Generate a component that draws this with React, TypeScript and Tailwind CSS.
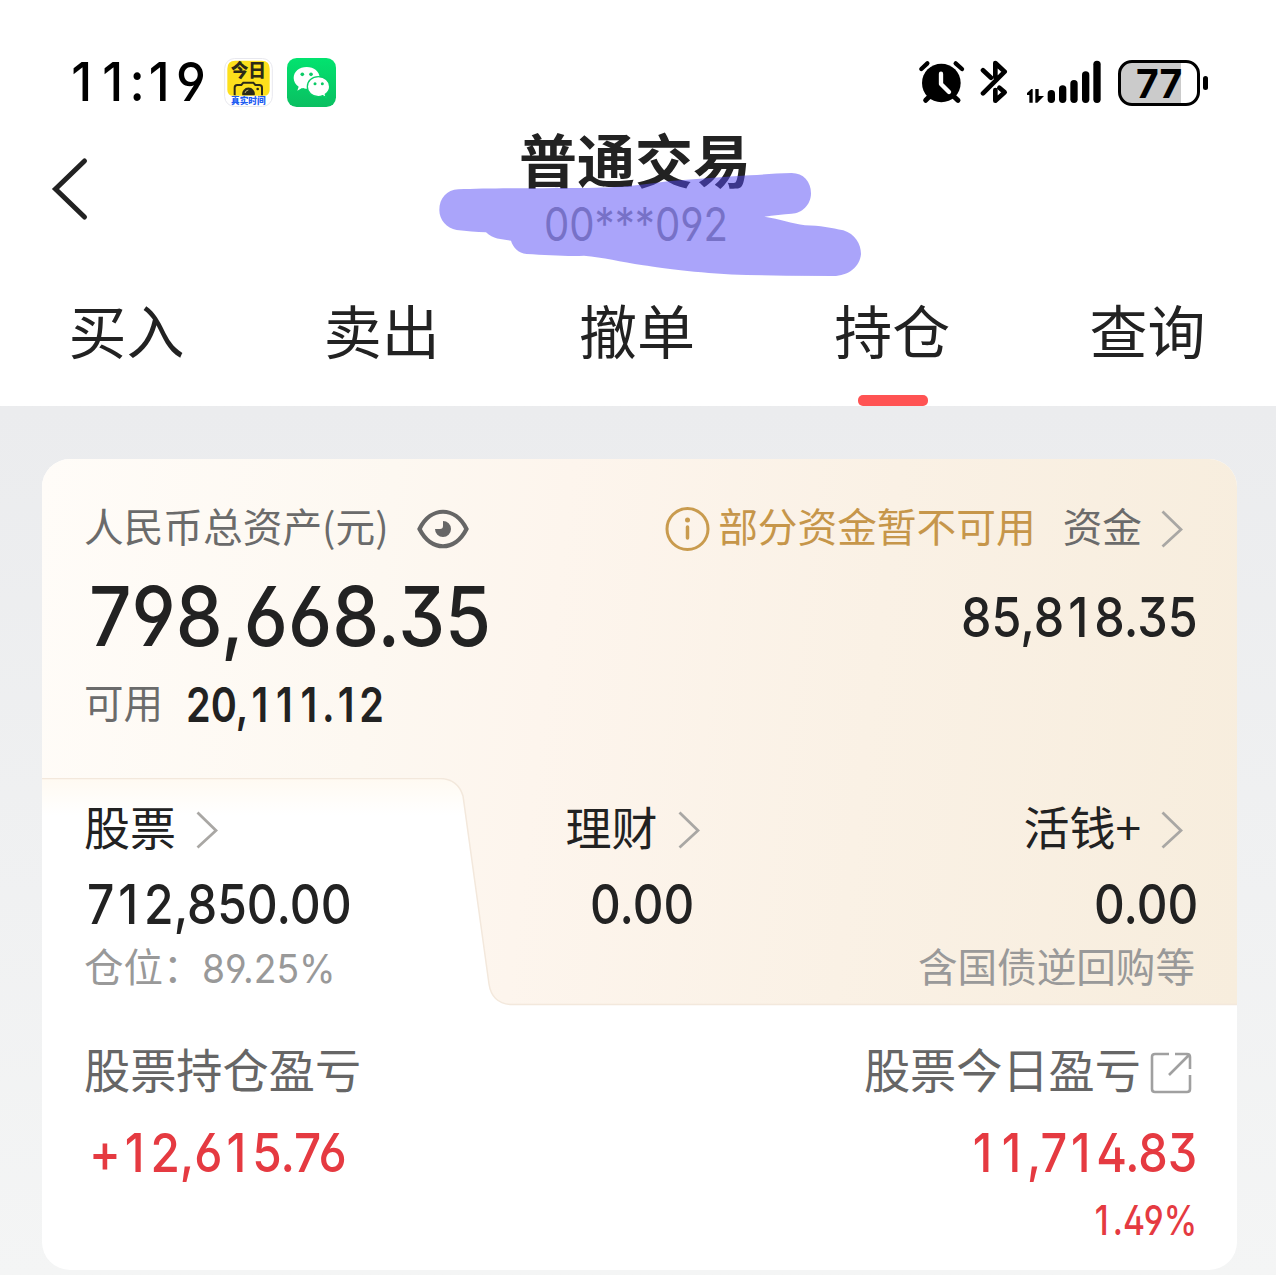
import { useLayoutEffect, useRef, useState } from "react";
import type { ReactNode } from "react";

const CJK = "font-['Noto_Sans_CJK_SC',sans-serif]";

/** Evenly pitched digits, fitted so the run is exactly `width` pixels wide. */
function Num({ text, width, className }: { text: string; width: number; className: string }) {
  const ref = useRef<HTMLSpanElement>(null);
  const [scale, setScale] = useState(1);
  useLayoutEffect(() => {
    if (ref.current) setScale(width / ref.current.offsetWidth);
  }, [width, text]);
  return (
    <span className="block shrink-0" style={{ width }}>
      <span
        ref={ref}
        className={`inline-block origin-left whitespace-nowrap font-['Inter',sans-serif] leading-none [font-feature-settings:'cv03','cv04','ss01'] ${className}`}
        style={{ transform: `scaleX(${scale})` }}
      >
        {text.split(/(1)/).map((part, i) =>
          part === "1" ? (
            <span key={i} className="inline-block w-[0.62em] pr-[0.04em] text-center">
              1
            </span>
          ) : (
            part
          ),
        )}
      </span>
    </span>
  );
}

function Row({ className, children }: { className: string; children: ReactNode }) {
  return <div className={`flex items-center ${className}`}>{children}</div>;
}

function Zh({ className, children }: { className: string; children: ReactNode }) {
  return <span className={`block whitespace-nowrap leading-none ${className}`}>{children}</span>;
}

function Chevron({ className = "" }: { className?: string }) {
  return (
    <svg className={`h-[38px] w-[22px] shrink-0 ${className}`} viewBox="0 0 22 38" fill="none" stroke="#a9a7a4" strokeWidth="2.8">
      <path d="M1.5 1.5 L20 19.5 L1.5 36.5" />
    </svg>
  );
}

function CameraApp() {
  return (
    <svg className="h-[49px] w-[49px]" viewBox="0 0 147 147">
      <rect x="2" y="1.500" width="143" height="144" rx="30" fill="#fff" stroke="#e8e8ee" strokeWidth="3" />
      <path d="M10 32 Q10 8 34 8 H113 Q137 8 137 32 V95 Q137 113 119 113 H28 Q10 113 10 95Z" fill="#fde01c" />
      <text x="73" y="58" textAnchor="middle" fontSize="53" fontWeight="800" fill="#2c2a18" fontFamily="Noto Sans CJK SC">今日</text>
      <path d="M32 112 V89 Q32 81 40 81 H52 L58 74 H88 L94 81 H106 Q114 81 114 89 V112" fill="none" stroke="#2c2a18" strokeWidth="6" />
      <path d="M55 112 A19 19 0 1 1 92 112Z" fill="#2c2a18" />
      <path d="M63 105 Q65 97 73 96" fill="none" stroke="#b8b070" strokeWidth="3" />
      <circle cx="101" cy="93" r="4" fill="#2c2a18" />
      <text x="73" y="139" textAnchor="middle" fontSize="26" fontWeight="800" fill="#1d5cf2" fontFamily="Noto Sans CJK SC">真实时间</text>
    </svg>
  );
}

function ChatApp() {
  return (
    <svg className="h-[49px] w-[49px]" viewBox="0 0 147 147">
      <defs>
        <linearGradient id="chat" x1="0" y1="0" x2="0" y2="1">
          <stop offset="0" stopColor="#02e36f" />
          <stop offset="1" stopColor="#0abf61" />
        </linearGradient>
      </defs>
      <rect width="147" height="147" rx="29" fill="url(#chat)" />
      <path d="M59 27 C37 27 20 41 20 60 C20 71 26 80 35 86 L31 98 L45 90 C50 92 55 92 60 92 C82 92 98 78 98 60 C98 41 81 27 59 27Z" fill="#fff" />
      <path d="M94 56 C75 56 61 69 61 86 C61 103 75 116 94 116 C99 116 103 115 107 113 L118 119 L115 109 C123 103 128 95 128 86 C128 69 113 56 94 56Z" fill="#fff" stroke="#06cf67" strokeWidth="4" />
      <g fill="#0acb66">
        <circle cx="46" cy="49" r="5.500" />
        <circle cx="72" cy="49" r="5.500" />
        <circle cx="84" cy="77" r="4.500" />
        <circle cx="106" cy="77" r="4.500" />
      </g>
    </svg>
  );
}

function StatusBar() {
  return (
    <div className="flex h-[50px] items-center pl-[67px] pr-[68px]">
      <div className="pb-[2px]">
        <Num text="11:19" width={139} className="text-[54px] font-medium text-black" />
      </div>
      <div className="ml-[18px] flex gap-[14px] pb-[1px]">
        <CameraApp />
        <ChatApp />
      </div>
      <div className="ml-auto flex items-center">
        <svg className="mr-[1px] h-12 w-12" viewBox="54 57 144 144" stroke="#000" strokeLinecap="round" fill="none">
          <circle cx="124" cy="129" r="58" fill="#000" stroke="none" />
          <path d="M64 87 L82 70 M167 70 L186 87" strokeWidth="13" />
          <path d="M77 181 L90 168 M174 181 L160 168" strokeWidth="15" />
          <path d="M123 101 V132 L147 156" stroke="#fff" strokeWidth="13" strokeLinejoin="round" />
        </svg>
        <svg className="ml-[13px] h-12 w-[30px]" viewBox="242 57 90 144" fill="none" stroke="#000" strokeWidth="14" strokeLinecap="round" strokeLinejoin="round">
          <path d="M251 91 L275 113" />
          <path d="M288 112 V69 L316 95 L251 160" />
          <path d="M288 150 V182 L316 157 L300 143" />
        </svg>
        <svg className="ml-[15px] mr-[1px] h-12 w-[77px]" viewBox="375 57 231 144">
          <path d="M398 188 H388 V165 H381 V159 L394 147 H398Z M406 147 H416 V168 H432 L412 188 H406Z" />
          <rect x="443" y="150" width="22" height="39" rx="11" />
          <rect x="477" y="136" width="22" height="53" rx="11" />
          <rect x="511" y="120" width="22" height="69" rx="11" />
          <rect x="546" y="94" width="22" height="95" rx="11" />
          <rect x="580" y="62" width="22" height="127" rx="11" />
        </svg>
        <div className="ml-[15px] flex items-center gap-[3px]">
          <div className="flex h-[46px] w-[82px] items-center justify-center rounded-[14px] border-[3px] border-black bg-[linear-gradient(90deg,#cbcbcb_60px,#fff_60px)] pt-[1px]">
            <Num text="77" width={46} className="text-[40px] font-bold text-black" />
          </div>
          <div className="h-[14px] w-[5px] rounded-full bg-black" />
        </div>
      </div>
    </div>
  );
}

function Header() {
  return (
    <div className="relative flex h-[174px] items-start">
      <svg className="ml-[50px] mt-[48px] h-[66px] w-[42px]" viewBox="0 0 42 66" fill="none" stroke="#222" strokeWidth="5" strokeLinecap="round" strokeLinejoin="round">
        <path d="M34.500 5 L5.500 33 L34.500 61" strokeLinejoin="miter" />
      </svg>
      <div className="ml-[345px] flex w-[396px] flex-col items-center">
        <Zh className="mt-[21px] text-[58px] font-bold text-[#222]">普通交易</Zh>
        <div className="ml-[2px] mt-[14px]">
          <Num text="00***092" width={184} className="text-[46px] text-[#999]" />
        </div>
      </div>
      <svg className="absolute left-[430px] top-[12px] h-[170px] w-[440px]" viewBox="0 0 1320 510">
        <path
          fill="#5549f5"
          fillOpacity="0.5"
          d="M85 208 C200 203 380 205 500 203 C600 202 660 190 720 183 C800 178 880 170 960 166 C1000 164 1040 159 1085 159 C1120 159 1143 185 1143 220 C1143 255 1115 281 1085 281 C1060 283 1030 285 1003 290 C1050 297 1085 310 1125 316 C1170 317 1205 324 1240 331 C1275 342 1293 372 1293 402 C1290 440 1255 468 1210 468 L1070 467 L950 465 C830 463 700 445 640 436 C570 425 520 412 462 407 C420 410 350 405 290 402 C265 400 248 380 243 362 C215 358 190 358 168 337 C140 337 110 333 80 330 C50 325 28 300 28 270 C28 235 50 210 85 208Z"
        />
      </svg>
    </div>
  );
}

const tabs = ["买入", "卖出", "撤单", "持仓", "查询"];

function Tabs() {
  return (
    <div className="grid h-[124px] grid-cols-5">
      {tabs.map((t) => (
        <div key={t} className="flex flex-col items-center">
          <Zh className="mr-[2px] mt-[18px] text-[58px] text-[#222]">{t}</Zh>
          {t === "持仓" && <div className="mt-auto h-[11px] w-[70px] rounded-[5px] bg-[#ff5353]" />}
        </div>
      ))}
    </div>
  );
}

function Summary() {
  return (
    <div className="h-[319px] pl-[42px] pr-[41px] pt-[39px]">
      <Row className="h-[60px]">
        <Zh className="pb-[6px] text-[39.7px] text-[#6b6b6b]">人民币总资产(元)</Zh>
        <svg className="ml-[28px] mt-[2px] h-10 w-[52px]" viewBox="0 0 52 40" fill="none" stroke="#666">
          <path d="M2.500 20 C14 -3 38 -3 49.500 20 C38 43 14 43 2.500 20Z" strokeWidth="4.200" />
          <path d="M26 12 A8 8 0 1 1 18 20 H23 Q26 20 26 17Z" fill="#666" stroke="none" />
        </svg>
        <svg className="ml-auto mt-[1px] h-[46px] w-[46px]" viewBox="0 0 46 46" fill="none" stroke="#c99b4e">
          <circle cx="22.500" cy="23" r="20.500" strokeWidth="3" />
          <path d="M22.500 21 V32" strokeWidth="3.500" strokeLinecap="round" />
          <circle cx="22.500" cy="14" r="2.500" fill="#c99b4e" stroke="none" />
        </svg>
        <Zh className="ml-[7px] pb-[6px] text-[39.7px] text-[#c6964a]">部分资金暂不可用</Zh>
        <Zh className="ml-[27px] pb-[6px] text-[39.7px] text-[#6b6b6b]">资金</Zh>
        <Chevron className="ml-[19px] mr-[13px] mt-[1px]" />
      </Row>
      <Row className="h-[118px] justify-between pl-[5px]">
        <Num text="798,668.35" width={402} className="text-[82px] font-medium text-[#222]" />
        <div className="-mr-[2px]">
          <Num text="85,818.35" width={237} className="text-[55px] font-medium text-[#222]" />
        </div>
      </Row>
      <Row className="h-[56px]">
        <Zh className="pb-[6px] text-[39.5px] text-[#6b6b6b]">可用</Zh>
        <div className="ml-[23px] mt-[2px]">
          <Num text="20,111.12" width={198} className="text-[48px] font-semibold text-[#222]" />
        </div>
      </Row>
    </div>
  );
}

function Holdings() {
  return (
    <div className="relative h-[226px]">
      <svg className="absolute inset-0 h-[230px] w-full" viewBox="0 0 1195 230">
        <defs>
          <linearGradient id="fade" x1="0" y1="0" x2="0" y2="1">
            <stop offset="0" stopColor="#fffaf2" />
            <stop offset="0.160" stopColor="#ffffff" />
          </linearGradient>
        </defs>
        <path d="M0 0.500 H398 Q416 1 421 18 L447 206 Q450 226 470 226.500 H1195 V230 H0Z" fill="url(#fade)" />
        <path d="M0 0.500 H398 Q416 1 421 18 L447 206 Q450 226 470 226.500 H1195" fill="none" stroke="#f3e8dc" strokeWidth="1.500" />
      </svg>
      <div className="relative flex justify-between pl-[42px] pr-[41px] pt-[21px]">
        <div className="w-[300px]">
          <Row className="h-[60px]">
            <Zh className="pb-[8px] text-[46px] text-[#222]">股票</Zh>
            <Chevron className="ml-[20px] mt-[1px]" />
          </Row>
          <Row className="h-[90px] pl-[3px]">
            <Num text="712,850.00" width={265} className="text-[55px] font-medium text-[#222]" />
          </Row>
          <Row className="h-[38px]">
            <Zh className="w-[118px] pb-[6px] text-[39.5px] text-[#999]">仓位：</Zh>
            <div className="mt-[1px]">
              <Num text="89.25%" width={134} className="text-[40px] text-[#999]" />
            </div>
          </Row>
        </div>
        <div className="mr-[35px] w-[134px]">
          <Row className="h-[60px]">
            <Zh className="pb-[8px] text-[46px] text-[#222]">理财</Zh>
            <Chevron className="ml-[20px] mt-[1px]" />
          </Row>
          <Row className="h-[90px] justify-end pr-[6px]">
            <Num text="0.00" width={104} className="text-[55px] font-medium text-[#222]" />
          </Row>
        </div>
        <div className="w-[280px]">
          <Row className="h-[60px] justify-end pr-[13px]">
            <Zh className="pb-[8px] text-[46px] text-[#222]">活钱+</Zh>
            <Chevron className="ml-[20px] mt-[1px]" />
          </Row>
          <Row className="-mr-[2px] h-[90px] justify-end">
            <Num text="0.00" width={104} className="text-[55px] font-medium text-[#222]" />
          </Row>
          <Row className="h-[38px] justify-end">
            <Zh className="pb-[6px] pr-[1px] text-[39.6px] text-[#999]">含国债逆回购等</Zh>
          </Row>
        </div>
      </div>
    </div>
  );
}

function Profit() {
  return (
    <div className="flex h-[266px] justify-between pl-[42px] pr-[40px] pt-[37px]">
      <div>
        <Row className="h-[60px]">
          <Zh className="pb-[6px] text-[46.2px] text-[#666]">股票持仓盈亏</Zh>
        </Row>
        <Row className="h-[104px] pl-[5px]">
          <Num text="+12,615.76" width={258} className="text-[54px] font-medium text-[#e53a41]" />
        </Row>
      </div>
      <div className="flex flex-col items-end">
        <Row className="h-[60px] pr-[5px]">
          <Zh className="pb-[6px] text-[46.2px] text-[#666]">股票今日盈亏</Zh>
          <svg className="ml-[9px] mt-1 h-[42px] w-[42px]" viewBox="0 0 42 42" fill="none" stroke="#a0a0a0" strokeWidth="2.600">
            <path d="M19 2 H5 Q2 2 2 5 V37 Q2 40 5 40 H37 Q40 40 40 37 V23" />
            <path d="M25 2 H37 Q40 2 40 5 V17 M39 3 L19 23" />
          </svg>
        </Row>
        <Row className="h-[104px]">
          <Num text="11,714.83" width={228} className="text-[54px] font-medium text-[#e53a41]" />
        </Row>
        <Row className="h-[30px]">
          <Num text="1.49%" width={105} className="text-[41px] font-medium text-[#e53a41]" />
        </Row>
      </div>
    </div>
  );
}

export default function App() {
  return (
    <div className={`h-[1275px] w-[1276px] overflow-hidden bg-white ${CJK}`}>
      <div className="flex h-[406px] flex-col pt-[58px]">
        <StatusBar />
        <Header />
        <Tabs />
      </div>
      <div className="h-[869px] bg-gradient-to-b from-[#ebecee] to-[#f4f5f5] pl-[42px] pt-[53px]">
        <div className="h-[811px] w-[1195px] overflow-hidden rounded-[28px] bg-white">
          <div className="bg-[linear-gradient(97deg,#fffcf8_0%,#fdf8f1_28%,#fdf5ed_42%,#faf1e5_68%,#f7eddd_100%)]">
            <Summary />
            <Holdings />
          </div>
          <Profit />
        </div>
      </div>
    </div>
  );
}
